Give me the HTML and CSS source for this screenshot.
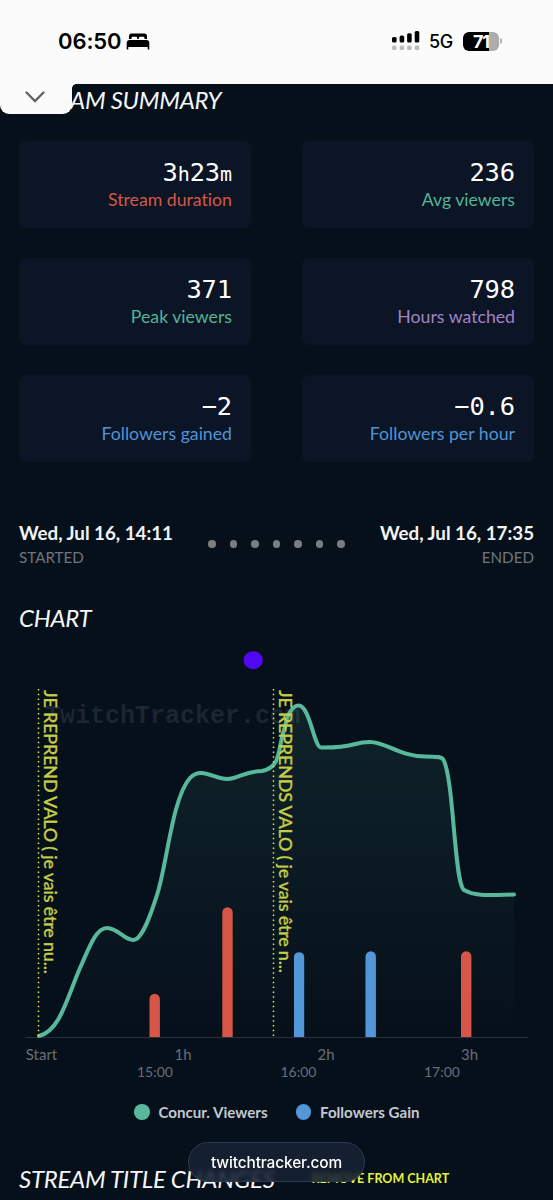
FILE: index.html
```html
<!DOCTYPE html>
<html lang="en">
<head>
<meta charset="utf-8">
<title>Stream summary</title>
<link rel="stylesheet" href="styles.css">
</head>
<body>
<div class="screen">
  <header class="status">
    <div class="clock">
      <span class="time">06:50</span>
      <svg class="bed" viewBox="0 0 24 17" width="24" height="17"><path d="M3 6V3Q3 .5 5.500 .5H18.500Q21 .5 21 3V6H18.500V5Q18.500 3.700 17.200 3.700H14Q12.800 3.700 12.800 5V6H11.200V5Q11.200 3.700 10 3.700H6.800Q5.500 3.700 5.500 5V6Z"/><path d="M.7 16.500V10Q.7 7 3.700 7H20.300Q23.300 7 23.300 10V16.500H21.700V14H2.300V16.500Z"/></svg>
    </div>
    <div class="network">
      <svg class="signal" viewBox="0 0 28 20" width="28" height="20"><rect x="0" y="6" width="4.600" height="5.500" rx="1.500"/><rect x="7.600" y="4.500" width="4.600" height="7" rx="1.500"/><rect x="15.100" y="2.200" width="4.600" height="9.300" rx="1.500"/><rect x="22.700" y="0" width="4.600" height="11.500" rx="1.500"/><g class="signal-off"><rect x="0" y="14.500" width="4.600" height="4.500" rx="1.500"/><rect x="7.600" y="14.500" width="4.600" height="4.500" rx="1.500"/><rect x="15.100" y="14.500" width="4.600" height="4.500" rx="1.500"/><rect x="22.700" y="14.500" width="4.600" height="4.500" rx="1.500"/></g></svg>
      <span class="carrier">5G</span>
      <div class="battery"><span>71</span></div>
      <i class="battery-tip"></i>
    </div>
  </header>
  <div class="sheet-tab"><svg viewBox="0 0 20 12" width="20" height="12"><path d="M1.500 1.500L10 10L18.500 1.500"/></svg></div>

  <main>
    <h2 class="heading first">STREAM SUMMARY</h2>
    <section class="cards">
      <div class="card"><div class="value">3<small>h</small>23<small>m</small></div><div class="label red">Stream duration</div></div>
      <div class="card"><div class="value">236</div><div class="label green">Avg viewers</div></div>
      <div class="card"><div class="value">371</div><div class="label green">Peak viewers</div></div>
      <div class="card"><div class="value">798</div><div class="label purple">Hours watched</div></div>
      <div class="card"><div class="value">−2</div><div class="label blue">Followers gained</div></div>
      <div class="card"><div class="value">−0.6</div><div class="label blue">Followers per hour</div></div>
    </section>
    <section class="period">
      <div><div class="date">Wed, Jul 16, 14:11</div><div class="caption">STARTED</div></div>
      <div class="dots"><i></i><i></i><i></i><i></i><i></i><i></i><i></i></div>
      <div class="end"><div class="date">Wed, Jul 16, 17:35</div><div class="caption">ENDED</div></div>
    </section>
    <h2 class="heading chart-heading">CHART</h2>
    <svg class="chart" viewBox="0 640 553 455" width="553" height="455">
      <defs><linearGradient id="area" x1="0" y1="0" x2="0" y2="1"><stop offset="0" stop-color="#5bb99c" stop-opacity=".11"/><stop offset="1" stop-color="#5bb99c" stop-opacity="0"/></linearGradient></defs>
      <text class="watermark" x="45" y="723" textLength="255">TwitchTracker.com</text>
      <path fill="url(#area)" d="M39 1036C60 1031 67 998 80 968C88 951 95 928 107 928C118 928 124 940 133 940C143 940 152 910 157 895C167 865 172 798 190 778C201 766 214 779 227 779C240 778 245 771 262 771C282 767 277 749 285 727C287 714 293 705.500 298.500 705.500C310 705.500 314 747.500 321 747.500C355 748 352 742 370 742C386 742 399 756 425 756.500C437 757 440 756 443 759C454 777 454 883 464 890C475 896.500 490 895 514 894.500V1037H39Z"/>
      <path class="axis" d="M25 1037.500H528"/>
      <g class="loss"><path d="M149.500 1037V999A5.200 5.200 0 0 1 159.900 999V1037Z"/><path d="M222.300 1037V912.500A5.200 5.200 0 0 1 232.700 912.500V1037Z"/><path d="M461 1037V956.500A5.200 5.200 0 0 1 471.400 956.500V1037Z"/></g>
      <g class="gain"><path d="M294 1037V956.500A5.200 5.200 0 0 1 304.200 956.500V1037Z"/><path d="M365.500 1037V956.500A5.200 5.200 0 0 1 375.900 956.500V1037Z"/></g>
      <path class="viewers" d="M39 1036C60 1031 67 998 80 968C88 951 95 928 107 928C118 928 124 940 133 940C143 940 152 910 157 895C167 865 172 798 190 778C201 766 214 779 227 779C240 778 245 771 262 771C282 767 277 749 285 727C287 714 293 705.500 298.500 705.500C310 705.500 314 747.500 321 747.500C355 748 352 742 370 742C386 742 399 756 425 756.500C437 757 440 756 443 759C454 777 454 883 464 890C475 896.500 490 895 514 894.500"/>
      <path class="marker" d="M38.500 689V1037M273.500 689V1037"/>
      <text class="marker-text" transform="translate(44 690) rotate(90)" textLength="284">JE REPREND VALO ( je vais être nu...</text>
      <text class="marker-text" transform="translate(279 690) rotate(90)" textLength="283">JE REPRENDS VALO ( je vais être n...</text>
      <ellipse class="pointer" cx="253.200" cy="660.200" rx="9.600" ry="9"/>
      <g class="ticks"><text x="41.500" y="1059.500">Start</text><text x="183" y="1059.500">1h</text><text x="326" y="1059.500">2h</text><text x="469.500" y="1059.500">3h</text><text class="hour" x="155" y="1077">15:00</text><text class="hour" x="298.500" y="1077">16:00</text><text class="hour" x="442" y="1077">17:00</text></g>
    </svg>
    <div class="legend"><span class="key"><i class="dot-green"></i>Concur. Viewers</span><span class="key"><i class="dot-blue"></i>Followers Gain</span></div>
    <div class="changes"><h2 class="heading">STREAM TITLE CHANGES</h2><span class="remove">REMOVE FROM CHART</span></div>
  </main>
  <div class="address">twitchtracker.com</div>
</div>
</body>
</html>
```
FILE: styles.css
```css
* { box-sizing: border-box; }
body { margin: 0; background: #06101b; color: #fff; font-family: Lato, sans-serif; }
.screen { position: relative; width: 553px; height: 1200px; overflow: hidden; display: flex; flex-direction: column; }
.status { height: 84px; flex: none; background: #fbfbfb; color: #000; font-family: Inter, sans-serif; display: flex; justify-content: space-between; padding: 30px 51px 0 58px; position: relative; z-index: 1; }
.clock, .network { display: flex; align-items: center; height: 22px; }
.time { font-size: 22px; font-weight: 600; letter-spacing: -.1px; }
.bed { margin-left: 5px; }
.signal { margin-top: -1px; }
.signal-off { fill: #bcbcbc; }
.carrier { font-size: 18px; font-weight: 500; margin-left: 9px; letter-spacing: -.3px; }
.battery { width: 36px; height: 19px; margin-left: 10px; border-radius: 6px; background: linear-gradient(90deg, #000 0 25.500px, #adadad 25.500px); color: #fff; font-size: 18px; font-weight: 700; line-height: 19px; text-align: center; letter-spacing: -1px; }
.battery-tip { width: 2px; height: 6px; margin-left: 1px; background: #b5b5b5; border-radius: 0 2px 2px 0; }
.sheet-tab { position: absolute; z-index: 2; left: 0; top: 80px; width: 72px; height: 34px; background: #fbfbfb; border-radius: 0 0 9px 9px; display: flex; align-items: center; justify-content: center; padding: 0 2px 1px 0; }
.sheet-tab::after { content: ""; position: absolute; left: 72px; top: 4px; width: 4px; height: 4px; background: radial-gradient(circle at 100% 100%, transparent 3.5px, #fbfbfb 4px); }
.sheet-tab svg { fill: none; stroke: #626262; stroke-width: 2.300; stroke-linecap: round; }
main { flex: none; }
.heading { margin: 0; font-size: 24px; line-height: 30px; font-style: italic; font-weight: 400; color: #f5f7fa; letter-spacing: -.28px; white-space: nowrap; }
.first { padding-left: 19px; margin-top: 1px; }
.cards { display: grid; grid-template-columns: 232px 232px; column-gap: 51px; row-gap: 30px; padding: 26px 19px 0; grid-auto-rows: 87px; }
.card { background: #0c1525; border-radius: 7px; text-align: right; padding: 16px 19px 0; }
.value { height: 30px; font: 25.4px/30px "DejaVu Sans Mono", monospace; letter-spacing: -.1px; }
.value small { font-size: 20px; }
.label { font-size: 17.7px; line-height: 24px; margin-top: 1px; font-variant-ligatures: none; }
.red { color: #d65747; } .green { color: #53b497; } .purple { color: #a083c5; } .blue { color: #5094d5; }
.period { display: flex; justify-content: space-between; padding: 0 19px; margin-top: 58px; }
.date { font-size: 18.8px; line-height: 26px; font-weight: 700; color: #f1f3f5; letter-spacing: -.03px; }
.caption { font-size: 15.2px; line-height: 22px; color: #70757d; }
.end { text-align: right; }
.dots { display: flex; gap: 14px; padding-top: 20px; }
.dots i { width: 7.5px; height: 7.5px; border-radius: 50%; background: #7b7e81; }
.chart-heading { padding-left: 19px; margin-top: 35px; }
.chart { display: block; margin-top: 7px; }
.watermark { font: bold 25px "Courier New", "Liberation Mono", monospace; fill: #1c2531; }
.axis { stroke: #28303d; fill: none; }
.loss { fill: #d65747; }
.gain { fill: #5297d9; }
.viewers { fill: none; stroke: #58b89c; stroke-width: 4; stroke-linecap: round; stroke-linejoin: round; }
.marker { stroke: #e1e449; stroke-width: 1.500; stroke-dasharray: 1.500 3.300; }
.marker-text { font: 500 18px Lato, sans-serif; fill: #c7cc46; stroke: #c7cc46; stroke-width: .3px; }
.pointer { fill: #5207f4; }
.ticks { font: 15px Lato, sans-serif; fill: #666d77; text-anchor: middle; }
.hour { font-size: 14px; }
.legend { display: flex; gap: 28px; padding-left: 134px; margin-top: 7px; height: 20px; }
.key { display: flex; align-items: center; gap: 9px; font-size: 15.1px; font-weight: 700; color: #c3c8d0; white-space: nowrap; }
.key i { width: 15.5px; height: 15.5px; border-radius: 50%; }
.dot-green { background: #58b89c; } .dot-blue { background: #5297d9; }
.changes { display: flex; padding-left: 19px; margin-top: 42px; align-items: center; }
.remove { margin: 0 0 2px 37px; font-size: 12.5px; font-weight: 700; color: #e5f338; white-space: nowrap; }
.address { position: absolute; left: 188px; top: 1142px; width: 177px; height: 40px; border: 1px solid #2b3b55; border-radius: 20px; background: rgba(24,34,52,.84); backdrop-filter: blur(2px); font: 500 15.4px/40px Inter, sans-serif; letter-spacing: -.1px; text-align: center; color: #fff; }
```
